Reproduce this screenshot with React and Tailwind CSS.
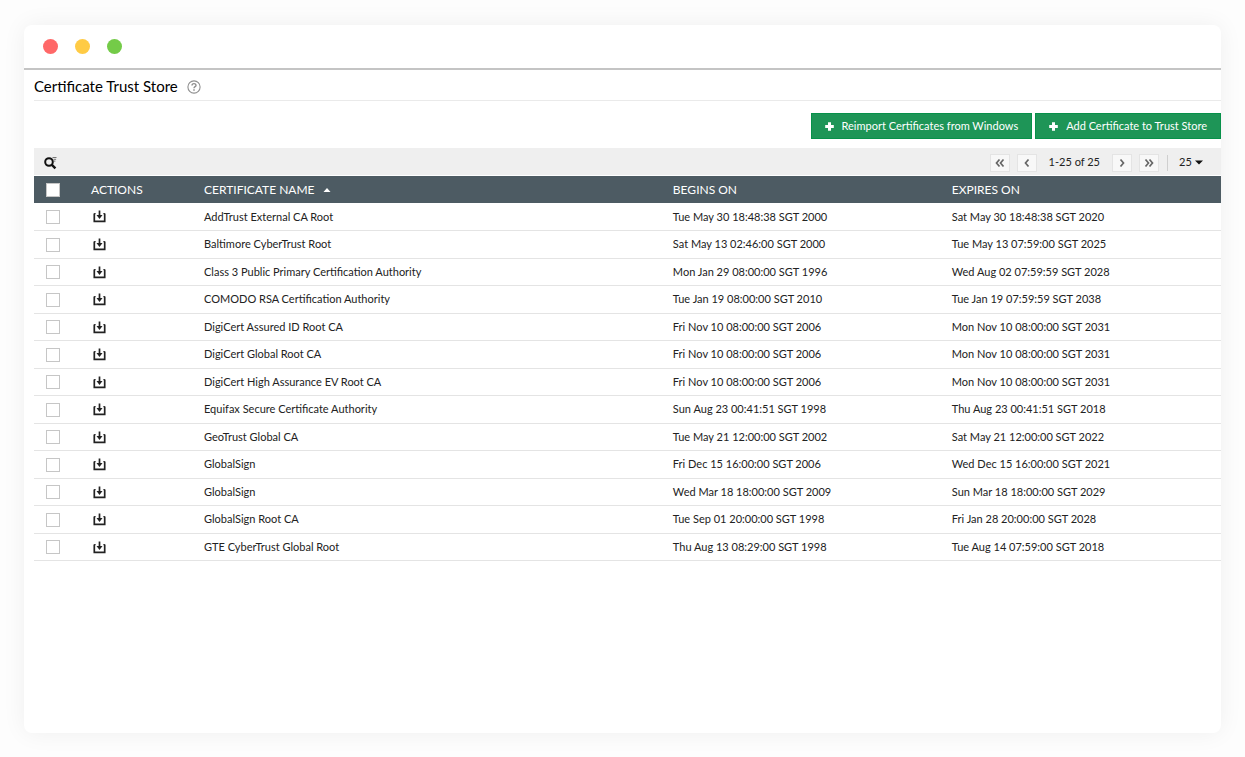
import React from "react";

const certificates = [
  ["AddTrust External CA Root", "Tue May 30 18:48:38 SGT 2000", "Sat May 30 18:48:38 SGT 2020"],
  ["Baltimore CyberTrust Root", "Sat May 13 02:46:00 SGT 2000", "Tue May 13 07:59:00 SGT 2025"],
  ["Class 3 Public Primary Certification Authority", "Mon Jan 29 08:00:00 SGT 1996", "Wed Aug 02 07:59:59 SGT 2028"],
  ["COMODO RSA Certification Authority", "Tue Jan 19 08:00:00 SGT 2010", "Tue Jan 19 07:59:59 SGT 2038"],
  ["DigiCert Assured ID Root CA", "Fri Nov 10 08:00:00 SGT 2006", "Mon Nov 10 08:00:00 SGT 2031"],
  ["DigiCert Global Root CA", "Fri Nov 10 08:00:00 SGT 2006", "Mon Nov 10 08:00:00 SGT 2031"],
  ["DigiCert High Assurance EV Root CA", "Fri Nov 10 08:00:00 SGT 2006", "Mon Nov 10 08:00:00 SGT 2031"],
  ["Equifax Secure Certificate Authority", "Sun Aug 23 00:41:51 SGT 1998", "Thu Aug 23 00:41:51 SGT 2018"],
  ["GeoTrust Global CA", "Tue May 21 12:00:00 SGT 2002", "Sat May 21 12:00:00 SGT 2022"],
  ["GlobalSign", "Fri Dec 15 16:00:00 SGT 2006", "Wed Dec 15 16:00:00 SGT 2021"],
  ["GlobalSign", "Wed Mar 18 18:00:00 SGT 2009", "Sun Mar 18 18:00:00 SGT 2029"],
  ["GlobalSign Root CA", "Tue Sep 01 20:00:00 SGT 1998", "Fri Jan 28 20:00:00 SGT 2028"],
  ["GTE CyberTrust Global Root", "Thu Aug 13 08:29:00 SGT 1998", "Tue Aug 14 07:59:00 SGT 2018"],
];

function PlusIcon() {
  return (
    <svg viewBox="0 0 9 9" className="size-[9px]" fill="currentColor" aria-hidden="true">
      <path d="M3 0.2h3V3h2.800v3H6v2.800H3V6H0.200V3H3z" />
    </svg>
  );
}

function DownloadIcon() {
  return (
    <svg viewBox="0 0 13 13" className="size-[13px]" fill="none" aria-hidden="true">
      <path d="M1.300 3.500v7.800h10.400V3.500" stroke="#222" strokeWidth="1.700" />
      <path d="M1 3.700h1.700M10.300 3.700H12" stroke="#222" strokeWidth="1" />
      <path d="M6.500 0.500v5" stroke="#222" strokeWidth="1.700" />
      <path d="M3.500 5.100h6L6.500 8.900z" fill="#222" />
    </svg>
  );
}

function SearchIcon() {
  return (
    <svg viewBox="0 0 14 14" className="size-[14px]" fill="none" aria-hidden="true">
      <circle cx="6" cy="6" r="3.800" stroke="#111" strokeWidth="2" />
      <path d="M8.700 8.700l3.700 3.700" stroke="#111" strokeWidth="2.400" />
      <path d="M9.500 1.500h4M10.500 3.300h2.600M11 5.100h1.400" stroke="#777" strokeWidth="1" />
    </svg>
  );
}

function HelpIcon() {
  return (
    <svg viewBox="0 0 14 14" className="size-[14px]" fill="none" stroke="#8f8f8f" aria-hidden="true">
      <circle cx="7" cy="7" r="6.100" strokeWidth="1.100" />
      <path d="M5 5.500C5 4.200 5.900 3.600 7 3.600s2 .7 2 1.800C9 6.700 7 6.700 7 8.300" strokeWidth="1.400" />
      <path d="M7 9.300v1.400" strokeWidth="1.500" />
    </svg>
  );
}

const chevrons = {
  first: "M5.500 2.500L2.500 6l3 3.500M9.500 2.500L6.500 6l3 3.500",
  previous: "M7.500 2.500L4.500 6l3 3.500",
  next: "M4.500 2.500L7.500 6l-3 3.500",
  last: "M2.500 2.500L5.500 6l-3 3.500M6.500 2.500L9.500 6l-3 3.500",
};

function PageButton({ label, path }) {
  return (
    <button type="button" aria-label={label} className="flex h-[18px] w-5 items-center justify-center border border-[#e4e4e4] bg-[#f8f8f8] text-[#666]">
      <svg viewBox="0 0 12 12" className="size-3" fill="none" stroke="currentColor" strokeWidth="1.700" aria-hidden="true">
        <path d={path} />
      </svg>
    </button>
  );
}

function ActionButton({ children }) {
  return (
    <button type="button" className="flex h-[26px] items-center gap-2 border border-[#07914a] bg-[#1e9557] px-[13px] text-[11px] text-white">
      <PlusIcon />
      {children}
    </button>
  );
}

function Checkbox({ label }) {
  return (
    <input
      type="checkbox"
      aria-label={label}
      className="block size-[14px] appearance-none border border-[#c6c6c6] bg-white checked:bg-[#1e9557]"
    />
  );
}

export default function App() {
  return (
    <div className="flex min-h-screen flex-col bg-[#fdfdfd] px-6 pt-[25px] pb-6 font-['Lato',sans-serif] text-[#222]">
      <div className="flex flex-1 flex-col rounded-lg bg-white shadow-[0_0_24px_rgba(0,0,0,0.06)]">
        <div className="flex h-[45px] items-center gap-[17px] border-b-2 border-[#c4c4c4] px-[19px]">
          <span className="size-[15px] rounded-full bg-[#ff6868]" />
          <span className="size-[15px] rounded-full bg-[#ffcb45]" />
          <span className="size-[15px] rounded-full bg-[#74cb48]" />
        </div>

        <main className="flex flex-col pl-[10px]">
          <header className="flex h-[31px] items-center gap-[9px] border-b border-[#eaeaea] pt-[3px]">
            <h1 className="text-[15px] text-black">Certificate Trust Store</h1>
            <button type="button" aria-label="Help">
              <HelpIcon />
            </button>
          </header>

          <div className="flex justify-end gap-[3px] pt-3 pb-[9px]">
            <ActionButton>Reimport Certificates from Windows</ActionButton>
            <ActionButton>Add Certificate to Trust Store</ActionButton>
          </div>

          <div className="flex h-[27px] items-center justify-between bg-[#efefef] pt-[2px] pr-[18px] pl-[9px]">
            <button type="button" aria-label="Search">
              <SearchIcon />
            </button>
            <nav aria-label="Pagination" className="flex items-center gap-[7px] text-[11px]">
              <PageButton label="First page" path={chevrons.first} />
              <PageButton label="Previous page" path={chevrons.previous} />
              <span className="px-[5px]">1-25 of 25</span>
              <PageButton label="Next page" path={chevrons.next} />
              <PageButton label="Last page" path={chevrons.last} />
              <span className="ml-px h-4 w-px bg-[#cfcfcf]" />
              <label className="relative ml-1 flex items-center">
                <select aria-label="Rows per page" defaultValue="25" className="w-6 appearance-none bg-transparent">
                  <option>25</option>
                  <option>50</option>
                </select>
                <svg viewBox="0 0 8 5" className="pointer-events-none absolute right-0 h-[5px] w-2" aria-hidden="true">
                  <path d="M0 0.500h8L4 4.500z" fill="#111" />
                </svg>
              </label>
            </nav>
          </div>

          <table className="mt-px w-full table-fixed border-collapse text-left">
            <thead>
              <tr className="h-[27px] bg-[#4d5b63] text-xs text-white">
                <th className="w-[57px] pl-3"><Checkbox label="Select all certificates" /></th>
                <th className="w-[113px] font-normal">ACTIONS</th>
                <th className="w-[39.5%] font-normal" aria-sort="ascending">
                  <button type="button" className="flex items-center gap-2">
                    CERTIFICATE NAME
                    <svg viewBox="0 0 8 4" className="h-1 w-2" aria-hidden="true">
                      <path d="M0.500 4h7L4 0z" fill="#fff" />
                    </svg>
                  </button>
                </th>
                <th className="w-[23.5%] font-normal">BEGINS ON</th>
                <th className="font-normal">EXPIRES ON</th>
              </tr>
            </thead>
            <tbody className="text-[11px]">
              {certificates.map(([name, begins, expires], index) => (
                <tr key={index} className="h-[27px] border-b border-[#e4e4e4] even:h-7 [&>td]:pt-px">
                  <td className="pl-3"><Checkbox label={`Select ${name}`} /></td>
                  <td>
                    <button type="button" aria-label={`Download ${name}`} className="ml-[2px] block">
                      <DownloadIcon />
                    </button>
                  </td>
                  <td>{name}</td>
                  <td>{begins}</td>
                  <td>{expires}</td>
                </tr>
              ))}
            </tbody>
          </table>
        </main>
      </div>
    </div>
  );
}
